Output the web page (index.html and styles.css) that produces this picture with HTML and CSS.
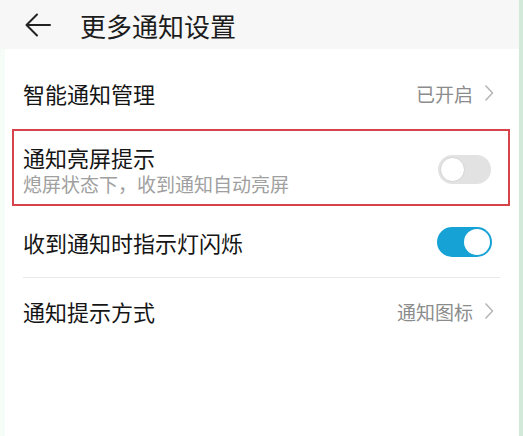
FILE: index.html
```html
<!DOCTYPE html>
<html lang="zh-CN">
<head>
<meta charset="utf-8">
<link rel="stylesheet" href="styles.css">
</head>
<body>
<div class="page">
  <div class="screen">
    <header class="header">
      <svg class="back" width="26" height="24" viewBox="0 0 26 24"><path d="M12 1.5 L1.5 12 L12 22.5 M1.5 12 H25" fill="none" stroke="#222" stroke-width="2" stroke-linecap="round" stroke-linejoin="round"/></svg>
      <h1 class="title">更多通知设置</h1>
    </header>

    <div class="row row-first">
      <span class="label">智能通知管理</span>
      <span class="value">已开启<svg class="chev" width="10" height="18" viewBox="0 0 10 18"><path d="M1.5 1.5 L8.5 9 L1.5 16.5" fill="none" stroke="#b5b5b5" stroke-width="1.5" stroke-linejoin="round"/></svg></span>
    </div>

    <div class="highlight">
      <div class="text-col">
        <span class="label">通知亮屏提示</span>
        <span class="sub">熄屏状态下，收到通知自动亮屏</span>
      </div>
      <span class="toggle off"><span class="knob"></span></span>
    </div>

    <div class="row row-gap">
      <span class="label">收到通知时指示灯闪烁</span>
      <span class="toggle on"><span class="knob"></span></span>
    </div>
    <div class="divider"></div>
    <div class="row row-last">
      <span class="label">通知提示方式</span>
      <span class="value">通知图标<svg class="chev" width="10" height="18" viewBox="0 0 10 18"><path d="M1.5 1.5 L8.5 9 L1.5 16.5" fill="none" stroke="#b5b5b5" stroke-width="1.5" stroke-linejoin="round"/></svg></span>
    </div>
  </div>
  <div class="edge"></div>
</div>
</body>
</html>
```
FILE: styles.css
```css
html, body {
  margin: 0;
  padding: 0;
  background: #fff;
}
body {
  font-family: "Noto Sans CJK SC", "Noto Sans", sans-serif;
  width: 523px;
  height: 436px;
  overflow: hidden;
}
.page {
  display: flex;
  height: 436px;
}
.screen {
  flex: 1;
  background: #fff;
  border-left: 5px solid #f6fcf8;
}
.edge {
  width: 4px;
  background: #d2e8d8;
}
.header {
  height: 49px;
  background: #f7f7f7;
  display: flex;
  align-items: center;
  margin-left: -5px;
  padding-left: 25px;
}
.back {
  display: block;
  margin-top: 1px;
}
.title {
  margin: 2px 0 0 29px;
  font-size: 26px;
  font-weight: 400;
  color: #1c1c1c;
  line-height: 30px;
}
.row {
  height: 70px;
  display: flex;
  align-items: center;
  justify-content: space-between;
  padding: 0 25px 0 18px;
}
.row-first {
  margin-top: 9px;
}
.row-gap {
  margin-top: 1px;
}
.row-last {
  box-sizing: border-box;
  padding-bottom: 4px;
}
.label {
  font-size: 22px;
  color: #151515;
  line-height: 28px;
}
.value {
  display: flex;
  align-items: center;
  font-size: 19px;
  color: #8c8c8c;
}
.chev {
  margin-left: 11px;
  display: block;
}
.highlight {
  box-sizing: border-box;
  height: 77px;
  margin: 1px 9px 0 7px;
  border: 2px solid #d7434b;
  display: flex;
  justify-content: space-between;
  align-items: center;
  padding: 0 17px 0 9px;
}
.text-col {
  display: flex;
  flex-direction: column;
  align-self: flex-start;
  padding-top: 12px;
}
.sub {
  font-size: 19px;
  color: #a0a0a0;
  line-height: 26px;
  margin-top: 0;
}
.divider {
  height: 1px;
  background: #e9e9e9;
  margin: 0 19px 0 18px;
}
.toggle {
  width: 55px;
  height: 30px;
  border-radius: 15px;
  box-sizing: border-box;
  padding: 2px;
  display: flex;
}
.toggle.on {
  background: #17a2d5;
  justify-content: flex-end;
  margin-right: 2px;
}
.toggle.off {
  background: #e2e2e2;
  justify-content: flex-start;
  width: 53px;
  height: 29px;
  margin-top: 3px;
}
.knob {
  width: 26px;
  height: 26px;
  border-radius: 50%;
  background: #fff;
  box-sizing: border-box;
}
.toggle.off .knob {
  width: 25px;
  height: 25px;
  border: 1px solid #d4d4d4;
}
```
